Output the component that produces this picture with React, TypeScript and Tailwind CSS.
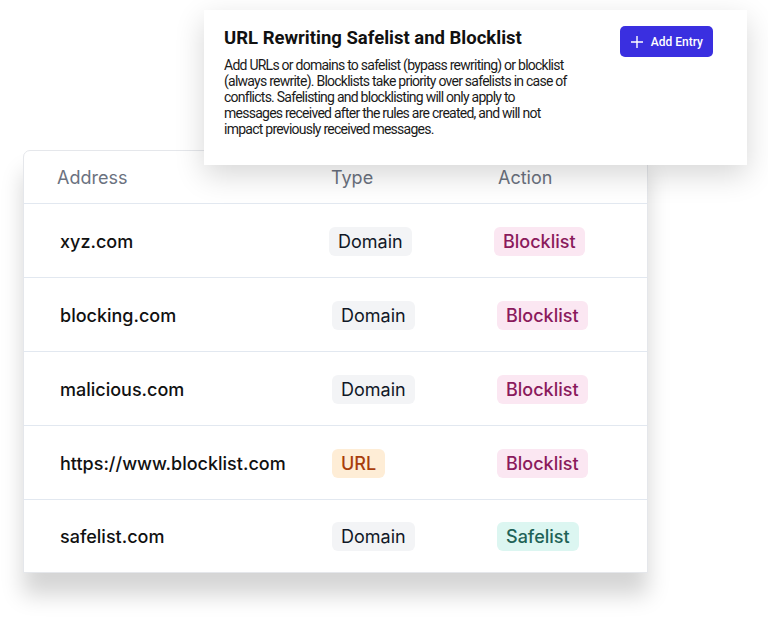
import React from "react";

type Row = {
  address: string;
  type: "Domain" | "URL";
  action: "Blocklist" | "Safelist";
};

const rows: Row[] = [
  { address: "xyz.com", type: "Domain", action: "Blocklist" },
  { address: "blocking.com", type: "Domain", action: "Blocklist" },
  { address: "malicious.com", type: "Domain", action: "Blocklist" },
  { address: "https://www.blocklist.com", type: "URL", action: "Blocklist" },
  { address: "safelist.com", type: "Domain", action: "Safelist" },
];

function TypeBadge({ type }: { type: Row["type"] }) {
  if (type === "URL") {
    return (
      <span className="inline-flex h-[29px] items-center rounded-md bg-[#feedd6] px-[9px] text-[18px] font-medium text-[#a83d0c]">
        URL
      </span>
    );
  }
  return (
    <span className="inline-flex h-[29px] items-center rounded-md bg-[#f3f4f6] px-[9px] text-[18px] text-[#111827]">
      Domain
    </span>
  );
}

function ActionBadge({ action }: { action: Row["action"] }) {
  if (action === "Safelist") {
    return (
      <span className="inline-flex h-[29px] items-center rounded-md bg-[#dcf6f1] px-[9px] text-[18px] font-medium text-[#1f6357]">
        Safelist
      </span>
    );
  }
  return (
    <span className="inline-flex h-[29px] items-center rounded-md bg-[#fbe7f2] px-[9px] text-[18px] font-medium text-[#8a1a5c]">
      Blocklist
    </span>
  );
}

export default function App() {
  return (
    <div className="relative h-[622px] w-[768px] overflow-hidden bg-white">
      <div className="pl-[23px] pt-[150px]" style={{ fontFamily: "Inter, 'Noto Sans', sans-serif" }}>
        <div className="w-[625px] overflow-hidden rounded-tl-[7px] border border-[#e5e7eb] bg-white shadow-[0_22px_22px_rgba(0,0,0,0.17)]">
          <div className="grid h-[53px] grid-cols-[274px_167px_1fr] items-center border-b border-[#e2e8f0] pl-[33px] pt-[1px] text-[18px] text-[#6b7280]">
            <div>Address</div>
            <div>Type</div>
            <div>Action</div>
          </div>
          {rows.map((r, i) => (
            <div
              key={r.address}
              className={
                "grid grid-cols-[272px_165px_1fr] items-center pl-[36px] pt-[1px] text-[18px] font-medium text-[#111] " +
                (i < rows.length - 1 ? "h-[74px] border-b border-[#e2e8f0]" : "h-[72px]")
              }
            >
              <div>{r.address}</div>
              <div className={i === 0 ? "-ml-[3px] font-normal" : "font-normal"}>
                <TypeBadge type={r.type} />
              </div>
              <div className={i === 0 ? "-ml-[3px] font-normal" : "font-normal"}>
                <ActionBadge action={r.action} />
              </div>
            </div>
          ))}
        </div>
      </div>

      <div
        className="absolute left-[204px] top-[10px] flex h-[155px] w-[543px] justify-between bg-white pl-[20px] pr-[34px] pt-[16px] shadow-[0_10px_28px_rgba(0,0,0,0.16)]"
        style={{ fontFamily: "Roboto, 'Liberation Sans', sans-serif" }}
      >
        <div className="w-[350px]">
          <h1 className="text-[18.5px] font-bold leading-[24px] text-[#111]">URL Rewriting Safelist and Blocklist</h1>
          <p className="mt-[7px] text-[14px] leading-[16px] tracking-[-0.75px] text-[#1a1a1a]">
            Add URLs or domains to safelist (bypass rewriting) or blocklist (always rewrite). Blocklists take priority
            over safelists in case of conflicts. Safelisting and blocklisting will only apply to messages received after
            the rules are created, and will not impact previously received messages.
          </p>
        </div>
        <div>
          <button className="flex h-[31px] items-center gap-[7px] rounded-[5px] bg-[#3a2fe0] pl-[10px] pr-[10px] text-[12px] font-medium text-white">
            <svg width="14" height="14" viewBox="0 0 14 14" fill="none" stroke="white" strokeWidth="1.4">
              <path d="M7 1v12M1 7h12" />
            </svg>
            Add Entry
          </button>
        </div>
      </div>
    </div>
  );
}
